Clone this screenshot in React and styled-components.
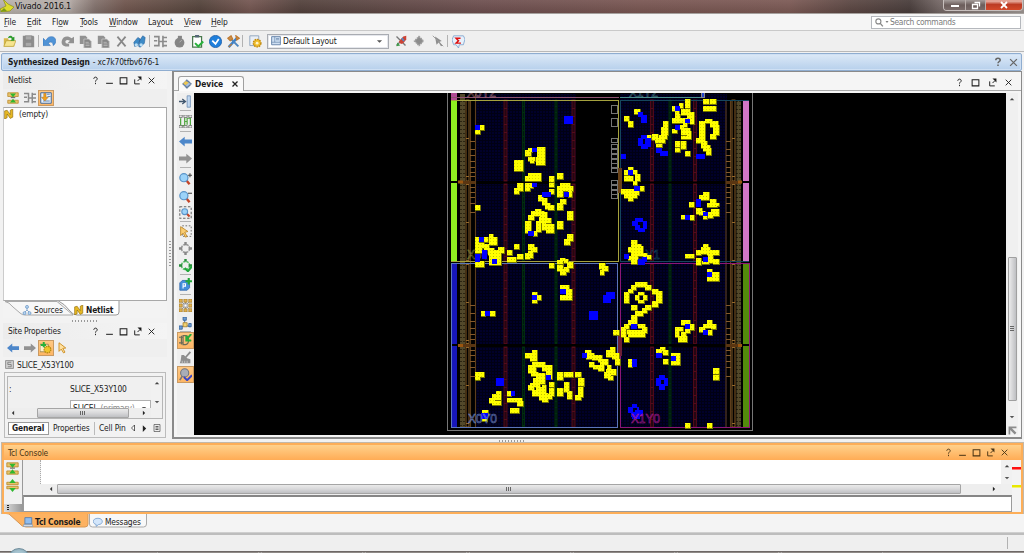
import React from 'react';
import styled, { createGlobalStyle, css } from 'styled-components';

const Global = createGlobalStyle`
  * { box-sizing: border-box; }
  body { margin: 0; background: #f0f0f0; overflow: hidden; }
`;

const Window = styled.div`
  width: 1024px; height: 553px; overflow: hidden;
  display: flex; flex-direction: column;
  background: #f2f2f2; color: #1b1b1b;
  font-family: "DejaVu Sans Condensed", "DejaVu Sans", sans-serif;
  font-stretch: condensed; font-size: 8.4px; line-height: 12px; letter-spacing: -0.15px;
  white-space: nowrap;
  svg { display: block; flex: none; }
`;
const TitleBar = styled.div`
  height: 14px; flex: none; display: flex; align-items: flex-start;
  border-bottom: 1px solid #a5a09d; color: #111; font-size: 9px; letter-spacing: -0.18px;
  background: linear-gradient(#ffffff10, #00000018),
    linear-gradient(90deg, #b9b3ae 0, #b1a7a2 70px, #83726d 95px, #70564e 125px, #55443c 200px, #755752 250px, #54423d 300px, #5a4642 340px, #6e5050 480px, #7a5753 640px, #7c5a55 790px, #5c4743 850px, #493d3b 910px, #756866 940px, #a09894 100%);
`;
const TitleText = styled.span`flex: 1; padding-left: 1px; text-shadow: 0 0 4px #fff8;`;
const WinButtons = styled.div`
  display: flex; height: 11px; margin-right: 1px;
  border: 1px solid #c7bfbd; border-top: 0; border-radius: 0 0 4px 4px; overflow: hidden;
`;
const WinButton = styled.div`
  width: ${p => p.$w}px; height: 10px; display: grid; place-items: center;
  border-right: 1px solid #b8aeab;
  background: ${p => p.$close ? 'linear-gradient(#e2a193 0 15%, #bc3b24 45%, #d4492a)' : 'linear-gradient(#a59d9b, #6b5d5b 50%, #7b6d6b)'};
  &:last-child { border-right: 0; }
`;
const MenuBar = styled.div`
  height: 17px; flex: none; display: flex; align-items: center; padding-left: 4px;
  background: #f5f5f5; border-bottom: 1px solid #c9c9c9;
`;
const MenuItem = styled.span`
  width: ${p => p.$w}px;
  u { text-underline-offset: 1px; text-decoration-thickness: 1px; text-decoration-color: #777; }
`;
const SearchBox = styled.div`
  margin-left: auto; margin-right: 3px; width: 150px; height: 13px; display: flex; align-items: center; gap: 1px;
  padding-left: 3px; background: #fff; border: 1px solid #b5b8bd; color: #7b7b7b; letter-spacing: -0.3px;
`;
const ToolBar = styled.div`
  height: 21px; flex: none; display: flex; align-items: center;
  background: #efefef; border-bottom: 1px solid #b8b8b8;
`;
const Cell = styled.div`
  width: ${p => p.$w || 16}px; height: ${p => p.$h || 18}px; display: grid; place-items: center; flex: none;
  ${p => p.$active && css`background: linear-gradient(#ffc883, #fdb665); border: 1px solid #c99a63;`}
`;
const Divider = styled.div`
  flex: none; background: #b2b2b2;
  ${p => p.$flat ? css`width: 11px; height: 1px; margin: 0 auto;` : css`width: 1px; height: 12px;`}
`;
const Combo = styled.div`
  width: 122px; height: 15px; margin: 0 3px 0 0; padding: 0 5px 0 3px; display: flex; align-items: center; gap: 2px;
  background: #fff; border: 1px solid #a9acb2; box-shadow: inset 0 0 0 1px #e5e7ec;
  span { flex: 1; }
`;
const DesignBar = styled.div`
  height: 18px; margin: 1px 2px 0 1px; flex: none; display: flex; align-items: center; padding: 0 3px 0 6px;
  border: 1px solid #8fadd0; border-radius: 2px; background: linear-gradient(#dce9f7, #b7d0ec);
  box-shadow: inset 0 0 0 1px #cfe0f4;
  b { margin-right: 3px; letter-spacing: -0.1px; }
  svg { margin-left: 6px; color: #666; }
`;
const Spacer = styled.div`flex: 1;`;
const Main = styled.div`height: 368px; flex: none; display: flex; padding-left: 3px;`;
const LeftColumn = styled.div`width: 164px; height: 367px; display: flex; flex-direction: column;`;
const PanelHeader = styled.div`
  height: ${p => p.$h || 16}px; flex: none; display: flex; align-items: center; padding: 0 8px 0 5px;
  background: linear-gradient(90deg, #ececec, #f4f4f4);
`;
const IconRow = styled.div`height: 18px; flex: none; display: flex; align-items: center; padding-left: 1px; background: #efefef;`;
const Tree = styled.div`
  height: 194px; flex: none; background: #fff; border: 1px solid #a8a8a8; border-left-color: #ccc;
  display: flex; align-items: flex-start; gap: 5px;
  svg { margin-top: 1px; }
`;
const Tabs = styled.div`height: 17px; flex: none; display: flex; position: relative; background: #f3f3f3;`;
const TabText = styled.div`
  display: flex; align-items: center; gap: 2px; height: ${p => p.$h || 17}px; position: relative;
  margin-left: ${p => p.$ml || 0}px; font-weight: ${p => p.$bold ? 700 : 400};
  width: ${p => p.$w}px;
`;
const TabShape = styled.svg`position: absolute; left: 0; top: 0;`;
const GripWrap = styled.div`height: ${p => p.$h}px; flex: none; display: grid; place-items: center;`;
const Grip = styled.div`
  ${p => p.$vertical
    ? css`width: 2px; height: 26px; background: repeating-linear-gradient(#999 0 1px, transparent 1px 3px);`
    : css`width: 26px; height: 2px; background: repeating-linear-gradient(90deg, #999 0 1px, transparent 1px 3px);`}
`;
const SiteName = styled.div`height: 15px; flex: none; display: flex; align-items: center; gap: 3px; padding-left: 2px;`;
const PropsFrame = styled.div`
  flex: 1; margin: 0 1px; border: 1px solid #bcbcbc; padding: 3px 2px 1px 2px; background: #f2f2f2;
`;
const PropsBox = styled.div`height: 43px; border: 1px solid #b6b6b6; display: grid; grid-template-columns: 1fr 11px; grid-template-rows: 31px 10px; background: #f0f0f0;`;
const PropsBody = styled.div`overflow: hidden; display: grid; grid-template: 20px 12px / 61px 1fr; padding-left: 1px; line-height: 24px;`;
const MiniCombo = styled.div`
  height: 16px; margin-top: 3px; border: 1px solid #b0b0b0; background: #fff; padding: 0 3px 0 2px; display: flex; align-items: center; line-height: 12px;
  i { font-style: normal; color: #888; flex: 1; margin-left: 3px; }
`;
const VScroll = styled.div`
  background: #f1f1f1; display: flex; flex-direction: column; align-items: center; justify-content: space-between; padding: 3px 0;
`;
const HScroll = styled.div`background: #eee; display: flex; align-items: center; height: 10px; padding: 0 ${p => p.$pr || 4}px 0 ${p => p.$pad || 4}px;`;
const Thumb = styled.div`
  height: 10px; margin: 0 auto 0 ${p => p.$ml}px; width: ${p => p.$w}px; display: grid; place-items: center;
  border: 1px solid #a5a5a5; background: linear-gradient(#eaeaea, #d8d8da 50%, #bfc0c3); border-radius: 1px;
`;
const Ridges = styled.div`width: 6px; height: 4px; background: repeating-linear-gradient(90deg, #666 0 1px, transparent 1px 2px);`;
const PropTabs = styled.div`display: flex; align-items: center; height: 16px; margin-top: 1px; padding-left: 1px;`;
const PropTab = styled.div`
  height: 13px; line-height: 13px; padding-left: ${p => p.$on ? 3 : 4}px;
  ${p => p.$on ? css`font-weight: 700; background: #fff; border: 1px solid #9b9b9b; line-height: 11px;` : css`border-right: ${p.$end ? 0 : 1}px solid #bbb;`}
  width: ${p => p.$w}px;
`;
const SideGrip = styled.div`width: 5px; display: flex; padding: 170px 0 0 2px;`;
const DevicePanel = styled.div`
  width: 850px; height: 368px; border: 1px solid #8a8a8a; border-left-width: 2px; border-bottom-width: 2px; background: #f5f5f5;
  display: flex; flex-direction: column;
`;
const DeviceHead = styled.div`
  height: 19px; flex: none; display: flex; align-items: flex-end; background: #f5f5f5; padding: 0 4px; border-bottom: 1px solid #a9a9a9;
`;
const DeviceTab = styled.div`
  width: 66px; height: 15px; margin-bottom: -1px; border: 1px solid #a0a0a0; border-bottom: 0; border-radius: 3px 3px 0 0;
  display: flex; align-items: center; gap: 3px; padding: 0 4px 0 3px; background: #fafafa; font-weight: 700; letter-spacing: -0.05px;
  svg:last-child { margin-left: auto; }
`;
const HeadButtons = styled.div`margin-left: auto; height: 15px; display: flex; align-items: center;`;
const DeviceBody = styled.div`flex: 1; display: flex; padding: 2px 2px 2px 3px;`;
const SideTools = styled.div`width: 17px; display: flex; flex-direction: column; background: #efefef;`;
const Canvas = styled.div`width: 812px; height: 342px; background: #000;`;
const RightScroll = styled.div`
  width: 12px; height: 342px; background: #f0f0f0; display: flex; flex-direction: column; align-items: center; padding-top: 3px;
`;
const VThumb = styled.div`
  width: 9px; height: 144px; margin: 155px 0 13px; border: 1px solid #a0a0a0; border-radius: 1px;
  background: linear-gradient(90deg, #ececec, #d5d5d7 50%, #bebfc2); display: grid; place-items: center;
`;
const VRidges = styled.div`width: 4px; height: 6px; background: repeating-linear-gradient(#666 0 1px, transparent 1px 2px);`;
const Console = styled.div`
  height: 71px; margin: 0 1px 0 2px; flex: none; border: 2px solid #fdae58; outline: 1px solid #c3b8a8; display: flex; flex-direction: column; background: #f0f0f0;
`;
const ConsoleHead = styled.div`
  height: 15px; flex: none; display: flex; align-items: center; padding: 0 9px 0 4px; background: linear-gradient(#ffd18c, #ffac55); color: #4a3414;
`;
const ConsoleBody = styled.div`flex: 1; display: flex;`;
const ConsoleTools = styled.div`
  width: 19px; display: flex; flex-direction: column; align-items: center; gap: 4px; padding-top: 2px; border-right: 1px solid #999;
`;
const ToolFooter = styled.div`
  margin-top: auto; width: 100%; height: 8px; padding: 1px 0 0 3px; background: linear-gradient(90deg, #ddd, #999);
`;
const FooterDots = styled.div`width: 2px; height: 6px; background: repeating-linear-gradient(#222 0 1px, transparent 1px 2px);`;
const ConsoleMain = styled.div`width: 991px; display: flex; flex-direction: column;`;
const Output = styled.div`
  height: 35px; display: grid; grid-template: 24px 11px / 18px 1fr 11px; background: #efefef;
`;
const Gutter = styled.div`grid-row: 1; border-right: 1px dotted #aaa;`;
const Paper = styled.div`background: #fff;`;
const Entry = styled.div`height: 17px; background: #fff; border: 1px solid #9b9b9b; border-top: 2px solid #868686;`;
const Marks = styled.div`width: 9px; display: flex; flex-direction: column; padding-top: 7px; gap: 15px; background: #f3f3f3;`;
const Mark = styled.div`height: 3px; background: ${p => p.$c}; border: solid #ffffff70; border-width: 0 0 1px;`;
const BottomTabs = styled.div`height: 19px; flex: none; display: flex; position: relative; padding-left: 2px; border-bottom: 1px solid #cfcfcf; background: #f4f4f4;`;
const StatusBar = styled.div`
  height: 18px; flex: none; background: #efefef; border-top: 2px solid #bdbdbd; display: flex; padding: 2px 16px 2px 0; justify-content: flex-end;
`;
const TaskBar = styled.div`
  flex: 1; background: linear-gradient(#77716e, #aaa5a2 40%, #b7b2ae); border-top: 1px solid #6e6866; display: flex; gap: 2px; padding-left: 157px; position: relative;
`;
const TaskButton = styled.div`width: 102px; border: 1px solid; border-color: #8f8a87 #ccc; background: #b9b5b2;`;
const Orb = styled.div`position: absolute; left: 8px; top: -4px; width: 22px; height: 22px; border-radius: 50%; border: 1px solid #6f8d9c; background: radial-gradient(#8fb5c8, #a8c5d1 50%, #7898a8);`;

const paths = {
  open: <><path d="M1 4h5l1 2h7v8H1z" fill="#d7b94b" /><path d="M1 14l3-7h12l-3 7z" fill="#f6e48e" stroke="#b59a35" strokeWidth=".8" /><path d="M6 4c1-4 5-4 6-1l2-1v5H9l2-2c-1-2-3-2-5-1z" fill="#2a9a2a" /></>,
  save: <><path d="M1 1h13l1 1v13H1z" fill="#8e8e8e" /><path d="M4 1h8v5H4zM4 9h8v5H4z" fill="#a9a9a9" stroke="#7c7c7c" strokeWidth=".7" /></>,
  undo: <><path d="M0 4v9h9L6.500 10c4-3 6 0 6 3 5-3 4-11-2-11-3 0-5 1-7 5z" fill="#4f93d6" stroke="#3472b8" strokeWidth=".7" /></>,
  redo: <path d="M16 2v8H8l3-3c-4-2-7 0-5 3l4 1v3C2 15 0 11 1 7c1-5 7-7 12-3z" fill="#929292" />,
  copy: <><path d="M1 1h7l2 2v8H1z" fill="#919191" /><path d="M6 5h6l3 3v8H6z" fill="#868686" stroke="#c8c8c8" /><path d="M8 9h4M8 11h5M8 13h5" stroke="#bbb" /></>,
  cross: <path d="M3 2l10 12M13 2L3 14" stroke="#888" strokeWidth="2.200" />,
  find: <><path d="M1 9l5-6 3 2-3 8-4 1zM8 7l4-6 3 2-1 7-5 5-2-1z" fill="#3c8ac6" stroke="#2a5f99" strokeWidth=".7" /><circle cx="4" cy="12" r="2" fill="#bde0f5" /><circle cx="10" cy="12" r="2" fill="#bde0f5" /></>,
  flow: <path d="M0 2h6M0 7h4M0 13h5M6 1v13M6 8h5M11 1v14M12 3h4M12 8h4M12 13h4" stroke="#8b8b8b" strokeWidth="2" />,
  timer: <><circle cx="8" cy="9.500" r="6" fill="#858585" /><path d="M6 1h5v3H6z" fill="#858585" /><path d="M8 9l3-3" stroke="#bbb" /></>,
  clip: <><path d="M2 2h11v13H2z" fill="#fff" stroke="#48784c" strokeWidth="1.500" /><path d="M5 0h5v3H5z" fill="#567" /><path d="M5 10l4 4 6-6" stroke="#27b33b" strokeWidth="2.600" fill="none" /></>,
  badge: <><circle cx="8" cy="8" r="7.500" fill="#1f7fdc" stroke="#1b5da8" /><path d="M4 7l4 4 4-6" stroke="#fff" strokeWidth="2.200" fill="none" /></>,
  tools: <><path d="M2 15L13 3" stroke="#3980cc" strokeWidth="3" /><path d="M3 3l11 11" stroke="#4c86c0" strokeWidth="2.400" /><path d="M1 4l4-3 2 4-3 2zM11 1l4 3-3 2zM2 15l4-4" fill="#c98f45" stroke="#c07b33" strokeWidth="1.500" /></>,
  gear: <><path d="M1 1h11v12H1z" fill="#e9eef5" stroke="#8299b5" /><circle cx="10" cy="10" r="4.600" fill="#f0bd2b" stroke="#c28a11" strokeWidth="1.800" strokeDasharray="2 1" /><circle cx="10" cy="10" r="1.700" fill="#fff3c5" /></>,
  layout: <><path d="M1 1h14v13H1z" fill="#cfdff2" stroke="#5f7ea5" strokeWidth="1.400" /><path d="M1 10h14M6 1v9M8 4h5M8 6h5" stroke="#5f7ea5" /></>,
  brush: <><path d="M2 2l12 12M2 14L9 7" stroke="#777" strokeWidth="1.800" /><path d="M5 9l6-7 4-1v5l-4 5-3 1z" fill="#cc4335" /><path d="M3 10l4 4-5 1z" fill="#3f9c49" /><path d="M9 4l3 4" stroke="#4a8ccc" strokeWidth="2" /></>,
  chipoff: <path d="M8 2l6 6-6 6-6-6z" fill="#8c8c8c" stroke="#9e9e9e" strokeWidth="2" strokeDasharray="2 1" />,
  arrowoff: <><path d="M4 2l9 6-3 1 4 5-2 1-3-5-3 3z" fill="#8e8e8e" /><path d="M1 1l14 14" stroke="#999" strokeWidth="1.200" /></>,
  sigma: <><path d="M2 1h12l2 4-2 7H9l-1 4-3-4H2L0 6z" fill="#e8f1fb" stroke="#7aa1cc" /><path d="M10.500 4H5l3 3-3 3h6" stroke="#d11" strokeWidth="1.800" fill="none" /></>,
  green: <><path d="M1 1h14v5H1zM1 11h14v4H1z" fill="#e7c26b" stroke="#b98828" /><path d="M4 2h8l-4 5zM4 14h8l-4-5z" fill="#2fb82f" /><path d="M5 7.500h6" stroke="#333" /></>,
  expand: <><path d="M1 4h14v3H1zM1 9h14v3H1z" fill="#e7c26b" stroke="#b98828" /><path d="M4 5h8L8 0zM4 11h8l-4 5z" fill="#2fb82f" /></>,
  doc: <><path d="M1 1h14v14H1z" fill="#e6effa" stroke="#41699a" strokeWidth="1.300" /><path d="M9 3h4M10 6h4M4 12h9" stroke="#41699a" /><path d="M5 2h3v5h3l-4.500 5L2 7h3z" fill="#f2a21e" stroke="#a8670a" strokeWidth=".6" /></>,
  net: <path d="M1 3l4-1 5 7V2l4-2v13l-4 2-5-7v6l-4 2z" fill="#e6b823" stroke="#8d6a0c" />,
  sources: <><path d="M8 3v5M8 8l-4 4M8 8l4 4" stroke="#6a93c1" strokeWidth="1.200" /><circle cx="8" cy="3" r="2.400" fill="#b7d5f2" stroke="#5888bb" /><circle cx="4" cy="13" r="2.400" fill="#b7d5f2" stroke="#5888bb" /><circle cx="12" cy="13" r="2.400" fill="#b7d5f2" stroke="#5888bb" /></>,
  left: <path d="M0 8l7-6v3.500h9v5H7V14z" fill="#4d87ca" />,
  right: <path d="M16 8L9 2v3.500H0v5h9V14z" fill="#929292" />,
  gearon: <><path d="M0 3h11v10H0z" fill="#fff0cc" stroke="#8a7a43" /><circle cx="10" cy="10" r="4.400" fill="#f0c52b" stroke="#b68a11" strokeWidth="1.800" strokeDasharray="2 1" /><path d="M5 0v7M1 4h7" stroke="#28b13a" strokeWidth="2.600" /></>,
  cursor: <path d="M4 1l9 7-4 .5 3 5-2 1-3-5-3 3z" fill="#ffe1a1" stroke="#cb8b1c" strokeWidth="1.200" />,
  slice: <><path d="M1 1h14v14H1z" fill="#d0d0d0" stroke="#888" strokeWidth="1.500" /><path d="M5 4h6M5 8h6M5 12h6M5 4v4M11 8v4" stroke="#777" strokeWidth="1.400" /></>,
  device: <><path d="M8 1l7 7-7 7-7-7z" fill="#6d8bb3" stroke="#455c7b" strokeDasharray="2 1" strokeWidth="1.600" /><path d="M6 3l5 3-5 4-4-3z" fill="#efc74e" /><path d="M11 6l2 2-5 4-2-2z" fill="#a9c2e2" /></>,
  collapse: <><path d="M0 8h7M4 5l4 3-4 3" stroke="#42576e" fill="none" strokeWidth="1.600" /><path d="M10 1h4v14h-4z" fill="#c3d9f0" stroke="#6e8fb5" /></>,
  routes: <><path d="M2 4v9h5V3M10 12V4h4v9M7 8h3" stroke="#50a740" strokeWidth="1.500" fill="none" /><path d="M0 0h4v3H0zM6 0h4v3H6zM12 0h4v3h-4zM0 13h4v3H0zM6 13h4v3H6zM12 13h4v3h-4z" fill="#eee" stroke="#6d6d6d" /></>,
  select: <><path d="M4 1h11v13H4z" fill="none" stroke="#555" strokeDasharray="2 2" /><path d="M2 2l9 6-4 1 3 5-2 1-3-5-3 3z" fill="#f9cc72" stroke="#bb821d" /></>,
  ring: <><circle cx="8" cy="8" r="5" fill="none" stroke="#999" strokeWidth="2" strokeDasharray="3 1" /><path d="M8 0v4M8 12v4M0 8h4M12 8h4" stroke="#888" strokeWidth="3" /></>,
  ringok: <><circle cx="8" cy="8" r="5" fill="none" stroke="#58be67" strokeWidth="2" strokeDasharray="3 1" /><path d="M8 0v3M0 8h4M12 8h4" stroke="#298d3b" strokeWidth="3" /><path d="M7 11l4 4 5-6" fill="none" stroke="#1fa738" strokeWidth="2.600" /></>,
  pblock: <><path d="M1 6l3-3h9v9l-3 3H1z" fill="#4590db" stroke="#3067ae" /><path d="M5 13V7h3v3H5" fill="none" stroke="#fff" strokeWidth="1.300" /><path d="M12 0v8M8 4h8" stroke="#22a838" strokeWidth="2.600" /></>,
  burst: <><path d="M2 2l12 12M14 2L2 14M8 2v12" stroke="#888" /><path d="M0 0h4v4H0zM6 0h4v4H6zM12 0h4v4h-4zM0 6h4v4H0zM12 6h4v4h-4zM0 12h4v4H0zM6 12h4v4H6zM12 12h4v4h-4z" fill="#e0b14e" stroke="#9d7529" strokeWidth=".8" /><path d="M6 6h4v4H6z" fill="#fff" stroke="#888" /></>,
  hub: <><path d="M7 3v7M2 13l5-3 7 2" stroke="#4a7ab4" strokeWidth="1.300" fill="none" /><path d="M5 0h4v4H5zM0 11h4v4H0zM12 8h3v4h-3z" fill="#6fa0d8" stroke="#335f98" /><path d="M5 7h5v5H5z" fill="#f0d272" stroke="#a9802c" /></>,
  gate: <><path d="M0 4h5M0 11h5M5 2h3c5 0 5 11 0 11H5zM11 8h4M3 2v11" stroke="#6b6b58" strokeWidth="1.500" fill="none" /><path d="M15 0L9 7M9 2v6h6" stroke="#27ad3a" strokeWidth="2.400" fill="none" /></>,
  rake: <><path d="M14 1L8 8" stroke="#8b8b8b" strokeWidth="2.200" /><path d="M3 5h3l4 4 4 1v5H1l1-3z" fill="#8e8e8e" /><path d="M4 12v3M7 12v3M10 12v3" stroke="#ccc" /></>,
  probe: <><circle cx="7" cy="6" r="5" fill="#a9adb7" stroke="#6f7581" strokeWidth="1.300" /><path d="M4 10l-3 5" stroke="#777" strokeWidth="2" /><path d="M6 11l4 4 6-6" fill="none" stroke="#3846c8" strokeWidth="2.400" /></>,
  console: <><path d="M3 1h11v10H3z" fill="#8fbdf0" stroke="#4c79ae" strokeWidth="1.300" /><path d="M1 12h14l1 3H0z" fill="#d4e1f0" stroke="#7791b0" /></>,
  bubble: <path d="M8 2c9 0 9 10 1 10l-4 3v-3c-7-2-6-10 3-10z" fill="#d3e6fb" stroke="#6b97c9" strokeWidth="1.200" />,
  help: <path d="M5 5c0-4 6-4 6 0 0 2-3 2.500-3 5M8 12v2.500" stroke="currentColor" strokeWidth="1.700" fill="none" />,
  min: <path d="M2 13h12" stroke="currentColor" strokeWidth="1.800" />,
  max: <path d="M2 3h12v11H2z" stroke="currentColor" strokeWidth="1.800" fill="none" />,
  float: <><path d="M3 6v8h9M8 9l4-4" stroke="currentColor" strokeWidth="1.700" fill="none" /><path d="M8 1h7v7z" fill="currentColor" /></>,
  close: <path d="M3 3l10 10M13 3L3 13" stroke="currentColor" strokeWidth="1.600" />,
  closeBold: <path d="M3 3l10 10M13 3L3 13" stroke="#222" strokeWidth="2.600" />,
  helpBold: <path d="M4.500 5c0-4 7-4 7 0 0 2-3.500 2.500-3.500 5M8 12v2.500" stroke="currentColor" strokeWidth="2.500" fill="none" />,
  closeGray: <path d="M2 2l12 12M14 2L2 14" stroke="currentColor" strokeWidth="2.200" />,
  corner: <path d="M1 1h14v3H7l8 8-3 3-8-8v8H1z" fill="#8c8c8c" />,
  up: <path d="M2 11h12L8 5z" fill="#444" />,
  down: <path d="M2 5h12l-6 6z" fill="#555" />,
  pl: <path d="M11 2v12L5 8z" fill="#333" />,
  pr: <path d="M5 2v12l6-6z" fill="#222" />,
  plh: <path d="M11 2v12L5 8z" fill="#fff" stroke="#222" strokeWidth="1.400" />,
  list: <><path d="M2 1h12v14H2z" fill="#eee" stroke="#444" strokeWidth="1.300" /><path d="M5 5h6M5 8h6M5 11h6" stroke="#222" strokeWidth="1.400" /></>,
  search: <><circle cx="6" cy="6" r="4.500" fill="none" stroke="#888" strokeWidth="2" /><path d="M9 9l5 6" stroke="#888" strokeWidth="2.400" /></>,
  zin: <><path d="M8 9l5 6" stroke="#c34428" strokeWidth="3" /><circle cx="6" cy="7" r="5" fill="#9cd3f9" stroke="#5b94c8" strokeWidth="1.500" /><path d="M11 4h5M13.500 1.500v5" stroke="#444" strokeWidth="1.300" /></>,
  zout: <><path d="M8 9l5 6" stroke="#c34428" strokeWidth="3" /><circle cx="6" cy="7" r="5" fill="#9cd3f9" stroke="#5b94c8" strokeWidth="1.500" /><path d="M11 4h5" stroke="#444" strokeWidth="1.300" /></>,
  zfit: <><path d="M1 1h14v14H1z" fill="none" stroke="#666" strokeWidth="1.300" strokeDasharray="3 2" /><path d="M9 9l4 4" stroke="#c34428" strokeWidth="2.600" /><circle cx="7" cy="7" r="3.600" fill="#9cd3f9" stroke="#5b94c8" strokeWidth="1.300" /></>,
};
const Icon = ({ n, s = 12 }) => <svg width={s} height={s} viewBox="0 0 16 16">{paths[n]}</svg>;

const WindowIcons = ({ names = ['help', 'min', 'max', 'float', 'close'], w = 14.2 }) => (
  <HeadButtons>{names.map(n => <Cell key={n} $w={w} $h={12}><Icon n={n} s={9} /></Cell>)}</HeadButtons>
);

/* Placed and highlighted sites; numbers are x,y,w,h in thirds of a pixel from each block's origin. */
const blocks = [
  {
    ox: 445, oy: 88,
    y: `90,111,26,16 90,127,15,10 240,187,18,18 248,180,14,12 276,178,24,28 248,206,22,14 256,214,12,10 273,206,27,26 206,217,28,33 248,255,39,24 240,264,16,16 312,264,16,18 337,255,16,17 215,286,18,22 206,300,17,18 240,286,16,22 250,286,14,14 312,286,16,12 312,303,16,16 345,286,30,12 337,294,46,14 337,306,18,20 370,306,12,22 280,322,14,16 291,330,16,22 300,345,14,18 308,350,20,15 345,332,17,16 337,344,16,22 90,351,15,14 366,370,17,26 337,400,16,24 366,438,17,20 357,454,17,18 270,362,18,14 258,370,38,14 248,380,20,15 285,373,20,16 282,386,22,18 273,400,16,32 290,400,14,16 300,390,18,14 290,415,18,10 304,408,22,26 240,400,17,34 264,430,12,14 90,447,40,16 131,438,14,16 131,447,26,24 90,460,12,35 100,465,18,14 118,467,14,20 90,480,20,15 130,480,18,22 140,486,28,28 160,477,17,18 132,500,20,16 206,468,16,16 186,486,16,15 186,506,26,16 215,498,18,14 240,496,16,18 250,468,17,18 258,477,18,16 250,490,14,20`,
    b: `90,112,15,14 261,180,14,12 261,286,14,12 357,312,16,16 291,312,27,15 250,430,17,14 101,447,16,15 110,487,17,26 90,497,16,24 357,83,26,24`,
  },
  {
    ox: 445, oy: 258,
    y: `345,0,16,10 337,5,16,12 358,3,12,12 366,12,17,18 358,28,14,14 345,34,17,16 337,22,18,18 312,14,16,15 90,8,26,20 131,4,38,16 186,0,26,10 215,0,18,4 240,0,16,4 462,14,18,18 472,24,18,16 464,36,14,14 262,102,14,12 276,112,12,14 261,126,14,8 345,82,28,12 362,92,20,34 345,110,36,16 108,160,12,14 136,160,13,14 504,216,18,16 261,276,15,14 240,284,36,16 254,298,22,10 420,276,18,16 424,286,22,18 440,292,30,14 432,312,16,16 460,292,10,20 464,304,24,18 444,320,32,14 458,330,20,8 485,320,14,14 484,334,28,16 476,342,22,18 488,354,17,12 494,267,16,12 484,276,26,22 500,285,22,18 510,302,14,18 261,313,38,14 248,322,24,22 290,322,30,16 258,342,20,12 304,334,16,30 273,345,26,16 264,360,20,14 284,358,16,20 256,374,28,12 248,381,20,16 273,386,26,10 261,395,30,18 290,380,12,34 282,405,26,20 290,420,18,13 304,408,16,16 312,372,16,14 312,390,16,24 337,343,16,24 357,343,27,15 390,343,17,15 400,361,16,24 357,373,16,30 366,400,14,24 337,390,16,24 400,386,15,30 390,410,17,16 90,343,26,14 90,352,14,14 154,400,14,16 142,408,26,18 132,420,18,16 142,428,26,14 186,400,12,14 186,419,28,14 206,419,26,14 215,430,18,14 196,449,26,16 110,457,18,14 110,482,16,8`,
    b: `141,4,16,14 90,0,16,12 261,112,14,14 345,93,17,15 484,102,26,22 474,110,24,25 432,160,27,25 121,160,14,14 412,285,14,14 304,352,14,14 153,360,25,24 197,400,14,14 108,466,22,16`,
  },
  {
    ox: 610, oy: 88,
    y: `73,62,17,16 42,83,16,16 54,100,16,16 112,140,10,12 127,139,18,16 136,150,30,15 158,100,17,24 152,118,22,24 146,140,24,12 138,168,17,10 225,33,16,26 206,44,14,16 185,55,10,14 194,68,14,12 213,62,26,18 230,73,22,20 185,90,52,16 194,78,16,12 240,90,12,18 218,104,12,12 186,122,14,14 206,112,16,10 213,120,26,22 230,128,12,24 213,144,18,10 194,160,16,18 213,158,16,24 194,180,16,12 225,189,16,14 280,33,17,15 300,33,17,15 280,55,37,14 285,93,22,12 268,100,18,40 300,100,24,18 308,112,18,30 300,138,18,16 258,150,26,16 268,138,18,12 273,160,18,20 280,172,20,16 288,180,16,20 54,237,16,10 42,245,14,16 70,247,10,12 76,257,14,22 42,265,26,14 70,280,10,10 90,294,12,14 33,304,20,15 50,304,36,16 42,318,40,12 54,328,16,10 280,313,16,14 268,322,28,14 292,345,30,12 300,334,17,18 308,345,18,10 237,342,16,15 258,360,18,18 268,368,16,12 294,373,14,16 302,363,24,20 213,380,12,14 240,381,12,14 280,385,12,8 64,457,17,14 64,468,28,12 54,477,30,14 84,475,14,20 64,488,36,16 98,494,14,12 54,505,30,10 64,515,17,14 104,500,18,12 225,497,26,14 258,486,16,14 258,510,16,20 280,468,14,14 273,477,28,20 292,486,34,14 310,514,16,15 294,500,14,24 276,520,20,8`,
    b: `85,73,14,14 94,80,18,26 92,141,20,12 85,149,14,26 105,150,17,26 94,168,20,14 139,180,16,14 150,189,25,14 33,198,16,15 194,54,16,16 226,92,14,14 194,112,16,14 258,198,27,15 54,247,16,14 73,294,16,14 258,334,16,24 280,371,14,14 226,381,14,14 76,391,24,12 66,400,18,14 98,400,14,24 76,412,14,14 84,420,20,12 42,497,16,15 85,514,20,16 96,507,16,14 280,507,14,14`,
  },
  {
    ox: 610, oy: 258,
    y: `290,34,15,12 304,43,22,22 291,56,36,12 54,93,14,12 42,102,15,32 64,82,14,14 76,73,36,13 106,82,16,14 127,93,16,14 137,100,18,36 127,130,18,16 85,102,16,8 76,110,11,16 99,110,13,16 85,126,16,8 104,141,18,15 64,140,16,16 96,150,16,16 76,160,24,14 64,170,16,16 54,187,28,14 42,197,14,16 33,206,16,32 84,198,20,12 50,215,50,14 96,207,16,18 54,222,50,14 42,236,16,15 10,216,16,16 213,187,28,14 240,197,12,18 194,206,26,12 194,212,14,24 225,212,14,14 213,222,16,14 204,235,26,16 291,187,14,12 280,197,24,12 304,197,14,16 268,207,18,14 294,216,12,16 150,266,16,12 139,274,16,12 158,276,17,14 160,304,15,14 183,285,27,35 54,304,12,24 310,330,17,17 310,350,17,17 225,495,16,15 290,495,16,15`,
    b: `291,43,14,14 64,198,16,15 226,198,14,14 280,216,14,14 139,285,16,14 183,293,16,16 66,304,14,24 148,351,18,14 139,361,13,22 163,361,12,22 148,379,18,16 66,437,15,14 54,446,15,20 80,446,8,14 64,462,24,14 76,457,24,16 66,470,24,12`,
  },
];
const cells = k => blocks.flatMap(q => q[k].split(' ').map(r => {
  const [x, y, w, h] = r.split(',').map(Number);
  const x0 = Math.round(q.ox + x / 3), y0 = Math.round(q.oy + y / 3);
  return [x0, y0, Math.round(q.ox + (x + w) / 3) - x0, Math.round(q.oy + (y + h) / 3) - y0];
}));
const yellow = cells('y'), blue = cells('b');
const Rects = ({ list, grow = 0, fill }) => list.map(([x, y, w, h], i) => (
  <rect key={i} x={x - grow} y={y - grow} width={w + 2 * grow} height={h + 2 * grow} fill={fill} />
));
const halves = [[100, 181], [184, 261], [264, 343.5], [347, 427]];
const Ladder = ({ x, w, c, dash, f }) => halves.map(([a, b]) => (
  <g key={a}>
    <rect x={x} y={a} width={w} height={b - a} fill={f || 'none'} stroke={c} strokeWidth=".9" />
    <path d={`M${x + w / 2} ${a}V${b}`} stroke={c} strokeWidth={w} strokeDasharray={dash} />
  </g>
));
const bankBoxes = [105, 118, 138, 144, 149, 154, 159, 163, 168, 180, 185, 190, 194];
const rungs = [141, 149, 155, 161, 167, 172, 176, 187, 192, 197, 203, 212, 305, 313, 321, 328, 334, 339, 350, 355, 361, 367, 376];

const DeviceMap = () => (
  <svg width="812" height="342" viewBox="194 93 812 342" shapeRendering="crispEdges">
    <defs>
      <pattern id="sites" width="3" height="3" patternUnits="userSpaceOnUse">
        <rect width="3" height="3" fill="#000014" /><rect width="2" height="2" fill="#00002a" />
      </pattern>
      <pattern id="dots" width="3" height="3" patternUnits="userSpaceOnUse">
        <rect x="1" y="1" width="1" height="1" fill="#9a9a00" opacity=".4" />
      </pattern>
      <pattern id="io" width="3" height="4" patternUnits="userSpaceOnUse">
        <rect width="3" height="4" fill="#52482a" /><rect x="1" y="1" width="1.500" height="1" fill="#2a2412" />
      </pattern>
    </defs>
    <g fill="none" stroke="#777"><path d="M447.500 93V430.500H752.500V93" /></g>
    <rect x="475" y="94" width="101" height="168" fill="url(#sites)" />
    <rect x="475" y="263" width="143" height="164" fill="url(#sites)" />
    <rect x="620" y="94" width="107" height="333" fill="url(#sites)" />
    <rect x="451" y="181" width="298" height="3" fill="#000" />
    <rect x="451" y="344" width="298" height="3" fill="#000" />
    <rect x="451" y="93" width="6" height="7" fill="#ad4b92" />
    <rect x="451" y="100" width="6" height="81" fill="#8fef20" /><rect x="451" y="183" width="6" height="79" fill="#8fef20" />
    <rect x="451" y="263" width="6" height="81" fill="#1717b9" /><rect x="451" y="346" width="6" height="81" fill="#1717b9" />
    <rect x="743" y="100" width="6" height="81" fill="#d276c6" /><rect x="743" y="183" width="6" height="79" fill="#d276c6" />
    <rect x="743" y="263" width="6" height="81" fill="#538b0c" /><rect x="743" y="346" width="6" height="81" fill="#538b0c" />
    <g shapeRendering="auto">
      <rect x="460" y="94" width="5" height="333" fill="url(#io)" />
      <rect x="736.500" y="101" width="4.500" height="326" fill="url(#io)" />
      <Ladder x={466} w={3} c="#94672a" dash="1 37" />
      <Ladder x={732} w={3} c="#94672a" dash="1 37" />
      <path d="M470.500 100v327M475.500 94v333M726 100v327M730.500 100v327" stroke="#5c3d1c" strokeWidth="1.100" />
      <path d={rungs.map(y => `M470 ${y + .5}h5M726 ${y + .5}h5`).join('')} stroke="#85592a" strokeWidth="1.100" />
      <path d="M458 182h5M738 182h4M458 345.500h5M738 345.500h4" stroke="#9a560f" strokeWidth="3" />
      <path d="M463 182.500h12M726 182.500h12M463 345.500h12M726 345.500h12" stroke="#5a3511" strokeWidth="3" />
      {[504, 572, 650.500, 693.500].map(x => <Ladder key={x} x={x} w={3} c="#540b1b" dash="1 7" f="#240612" />)}
      {[522.500, 555, 669].map(x => <Ladder key={x} x={x} w={2} c="#00300f" dash="1 5" f="#001610" />)}
    </g>
    <path d="M451 97.500h168" stroke="#8d5270" /><path d="M620 97.500h82" stroke="#4b8e8b" />
    <path d="M451 100.500H618.500V261.500H451" fill="none" stroke="#a5a23e" />
    <path d="M620.500 100.500H749M620.500 100v161H749" fill="none" stroke="#14465c" />
    <rect x="451.500" y="263.500" width="166" height="164" fill="none" stroke="#5c77ba" />
    <rect x="620.500" y="263.500" width="129" height="164" fill="none" stroke="#8c1676" />
    {bankBoxes.map((y, i) => <rect key={y} x="611.500" y={y + .5} width="6" height={i < 2 ? 8 : 4} fill="none" stroke="#757575" />)}
    <rect x="618" y="168" width="4" height="25" fill="#694218" /><rect x="618" y="331" width="4" height="25" fill="#6e1f35" />
    <g fontFamily="Liberation Sans, sans-serif" fontSize="12" fill="none" strokeWidth=".45" shapeRendering="auto">
      <text x="467" y="97" stroke="#ad7783">X0Y2</text><text x="629" y="97" stroke="#4d8b8d">X1Y2</text>
      <text x="467" y="259" stroke="#969b3e">X0Y1</text><text x="631" y="259" stroke="#15506b">X1Y1</text>
    </g>
    <rect x="701.500" y="91.500" width="3" height="6" fill="#24c" stroke="#888" />
    <Rects list={yellow} grow={0.5} fill="#747400" />
    <Rects list={yellow} fill="#ffff00" />
    <Rects list={yellow} fill="url(#dots)" />
    <Rects list={blue} fill="#0000ff" />
    <g fontFamily="Liberation Sans, sans-serif" fontSize="12" fill="none" strokeWidth=".5" shapeRendering="auto">
      <text x="468" y="423" stroke="#7189c8">X0Y0</text><text x="631" y="423" stroke="#b01c94">X1Y0</text>
    </g>
  </svg>
);

const toolbar = [['open', 18], ['save', 20], 0, ['undo', 20], ['redo', 17], ['copy', 18], ['copy', 18], ['cross', 18], ['find', 19], 0, ['flow', 20], ['timer', 18], ['clip', 19], ['badge', 17], ['tools', 18], 0, ['gear', 24]];
const sideTools = [['collapse', 17], 0, ['routes', 20], 0, ['left', 18], ['right', 17], 0, ['zin', 20], ['zout', 16], ['zfit', 17], 0, ['select', 18], ['ring', 17], ['ringok', 17], 0, ['pblock', 19], 0, ['burst', 20], ['hub', 16], 0, ['gate', 17, 1], ['rake', 17], ['probe', 17, 1]];
const menus = [['', 'F', 'ile', 23], ['', 'E', 'dit', 25], ['Fl', 'o', 'w', 28], ['', 'T', 'ools', 29], ['', 'W', 'indow', 39], ['La', 'y', 'out', 36], ['', 'V', 'iew', 27], ['', 'H', 'elp', 20]];

export default function App() {
  return (
    <Window>
      <Global />
      <TitleBar>
        <svg width="14" height="12" viewBox="0 0 14 12"><path d="M0 9l6-3-3-7 5 5 6 3-4 4-8 1z" fill="#dcdc2c" stroke="#8b8a18" strokeWidth=".7" /><path d="M0 12l4-4 3 3z" fill="#7c9b19" /></svg>
        <TitleText>Vivado 2016.1</TitleText>
        <WinButtons>
          <WinButton $w={22}><svg width="10" height="8"><path d="M1 4h8v2H1z" fill="#fff" /></svg></WinButton>
          <WinButton $w={20}><svg width="10" height="9"><path d="M3.500 1.500h5v4M1.500 3.500h5v4h-5z" fill="none" stroke="#fff" strokeWidth="1.300" /></svg></WinButton>
          <WinButton $w={36} $close><svg width="10" height="9"><path d="M2 1l6 6M8 1L2 7" stroke="#fff" strokeWidth="1.800" /></svg></WinButton>
        </WinButtons>
      </TitleBar>
      <MenuBar>
        {menus.map(([a, m, b, w]) => <MenuItem key={b} $w={w}>{a}<u>{m}</u>{b}</MenuItem>)}
        <SearchBox><Icon n="search" s={9} /><Icon n="down" s={4} />Search commands</SearchBox>
      </MenuBar>
      <ToolBar>
        {toolbar.map((t, i) => t ? <Cell key={i} $w={t[1]}><Icon n={t[0]} s={13} /></Cell> : <Divider key={i} />)}
        <Combo><Icon n="layout" s={10} /><span>Default Layout</span><Icon n="down" s={7} /></Combo>
        <Cell $w={18}><Icon n="brush" /></Cell><Cell $w={18}><Icon n="chipoff" /></Cell><Cell $w={19}><Icon n="arrowoff" /></Cell>
        <Divider /><Cell $w={21}><Icon n="sigma" s={13} /></Cell>
      </ToolBar>
      <DesignBar>
        <b>Synthesized Design</b><span>- xc7k70tfbv676-1</span><Spacer />
        <Icon n="helpBold" s={10} /><Icon n="closeGray" s={9} />
      </DesignBar>
      <Main>
        <LeftColumn>
          <PanelHeader $h={18}>Netlist<WindowIcons /></PanelHeader>
          <IconRow>
            <Cell $w={18}><Icon n="green" /></Cell><Cell $w={16}><Icon n="flow" /></Cell><Cell $w={16} $h={16} $active><Icon n="doc" /></Cell>
          </IconRow>
          <Tree><Icon n="net" s={10} /><span>(empty)</span></Tree>
          <Tabs>
            <TabShape width="164" height="17"><path d="M2 .5Q6 1 10 6l7 6q2 2 5 2H70L54 .5z" fill="#f7f7f7" stroke="#aaa" /><path d="M54 -1Q62 3 67 10q3 4 7 4h39q3 0 3-3V-1" fill="#fff" stroke="#999" /></TabShape>
            <TabText $ml={19} $w={50}><Icon n="sources" s={10} />Sources</TabText>
            <TabText $ml={2} $bold><Icon n="net" s={10} />Netlist</TabText>
          </Tabs>
          <GripWrap $h={5}><Grip /></GripWrap>
          <PanelHeader>Site Properties<WindowIcons /></PanelHeader>
          <IconRow>
            <Cell $w={18}><Icon n="left" /></Cell><Cell $w={16}><Icon n="right" /></Cell><Cell $w={16} $h={16} $active><Icon n="gearon" /></Cell><Cell><Icon n="cursor" /></Cell>
          </IconRow>
          <SiteName><Icon n="slice" s={9} />SLICE_X53Y100</SiteName>
          <PropsFrame>
            <PropsBox>
              <PropsBody><span>:</span><span>SLICE_X53Y100</span><span /><MiniCombo>SLICEL <i>(primary)</i><Icon n="down" s={6} /></MiniCombo></PropsBody>
              <VScroll><Icon n="up" s={6} /><Icon n="down" s={6} /></VScroll>
              <HScroll $pad={2}><Icon n="pl" s={6} /><Thumb $ml={21} $w={92}><Ridges /></Thumb><Icon n="pr" s={6} /></HScroll>
            </PropsBox>
            <PropTabs>
              <PropTab $on $w={41}>General</PropTab><PropTab $w={46}>Properties</PropTab><PropTab $w={34} $end>Cell Pin</PropTab>
              <Cell $w={8}><Icon n="plh" s={8} /></Cell><Cell $w={15}><Icon n="pr" s={9} /></Cell><Cell $w={9}><Icon n="list" s={8} /></Cell>
            </PropTabs>
          </PropsFrame>
        </LeftColumn>
        <SideGrip><Grip $vertical /></SideGrip>
        <DevicePanel>
          <DeviceHead>
            <DeviceTab><Icon n="device" s={10} />Device<Icon n="closeBold" s={8} /></DeviceTab>
            <WindowIcons names={['help', 'max', 'float', 'close']} w={16.5} />
          </DeviceHead>
          <DeviceBody>
            <SideTools>
              {sideTools.map((t, i) => t ? <Cell key={i} $w={17} $h={t[1]} $active={t[2]}><Icon n={t[0]} s={13} /></Cell> : <Divider key={i} $flat />)}
            </SideTools>
            <Canvas><DeviceMap /></Canvas>
            <RightScroll><Icon n="up" s={6} /><VThumb><VRidges /></VThumb><Icon n="down" s={6} /><Spacer /><Icon n="corner" s={9} /></RightScroll>
          </DeviceBody>
        </DevicePanel>
      </Main>
      <GripWrap $h={4}><Grip /></GripWrap>
      <Console>
        <ConsoleHead>Tcl Console<WindowIcons /></ConsoleHead>
        <ConsoleBody>
          <ConsoleTools><Icon n="green" s={13} /><Icon n="expand" s={13} /><ToolFooter><FooterDots /></ToolFooter></ConsoleTools>
          <ConsoleMain>
            <Output>
              <Gutter /><Paper /><VScroll><Icon n="up" s={6} /><Icon n="down" s={6} /></VScroll>
              <span />
              <HScroll $pad={7} $pr={4}><Icon n="pl" s={6} /><Thumb $ml={3} $w={904}><Ridges /></Thumb><Icon n="pr" s={6} /></HScroll>
            </Output>
            <Entry />
          </ConsoleMain>
          <Marks><Mark $c="#ff1010" /><Mark $c="#e8e800" /></Marks>
        </ConsoleBody>
      </Console>
      <BottomTabs>
        <TabShape width="150" height="18"><path d="M3 -1h85v11q0 3-3 3H26q-4 0-7-4L9 0z" fill="#fdb261" stroke="#d79855" /><path d="M89.500 -1h57v11q0 3-3 3h-51q-3 0-3-3z" fill="#f8f8f8" stroke="#aaa" /></TabShape>
        <TabText $ml={21} $w={64} $bold $h={15}><Icon n="console" s={10} />Tcl Console</TabText>
        <TabText $ml={6} $h={15}><Icon n="bubble" s={10} />Messages</TabText>
      </BottomTabs>
      <StatusBar><Divider /></StatusBar>
      <TaskBar><Orb />{[0, 1, 2, 3, 4, 5, 6].map(i => <TaskButton key={i} />)}</TaskBar>
    </Window>
  );
}
